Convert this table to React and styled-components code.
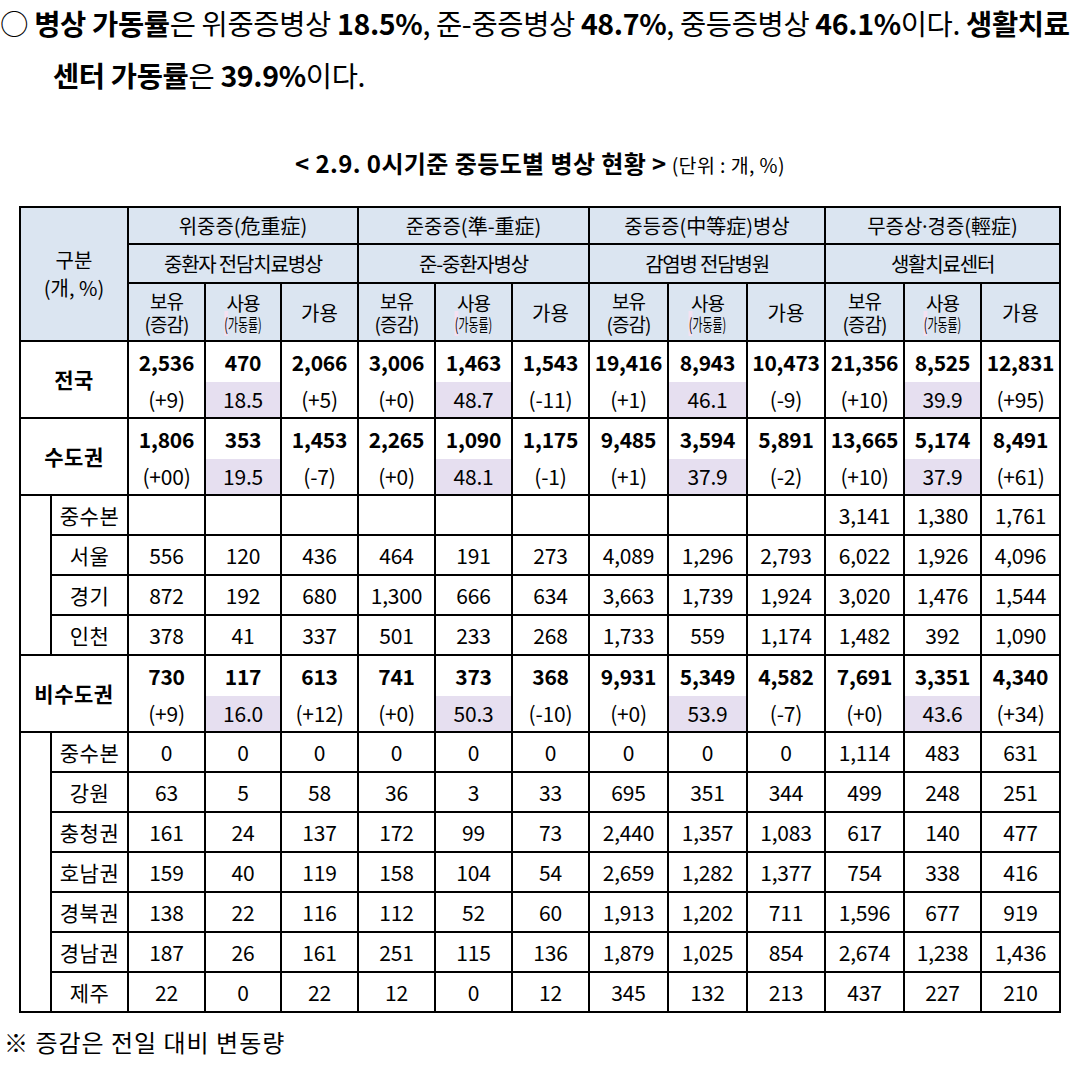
import React from "react";
import styled, { createGlobalStyle } from "styled-components";

const GlobalStyle = createGlobalStyle`
  * {
    box-sizing: border-box;
  }
  body {
    margin: 0;
    background: #fff;
    color: #000;
    font-family: "Noto Sans CJK KR", "Noto Sans", sans-serif;
  }
`;

const COLS = [31, 77, 77, 76, 77, 77, 77, 77, 79, 79, 78, 79, 77, 79];

const GROUPS = [
  { key: "crit", title: "위중증(危重症)", sub: "중환자 전담치료병상" },
  { key: "semi", title: "준중증(準-重症)", sub: "준-중환자병상" },
  { key: "mod", title: "중등증(中等症)병상", sub: "감염병 전담병원" },
  { key: "mild", title: null, sub: "생활치료센터" },
];

const MAJOR = {
  nation: {
    name: "전국",
    top: ["2,536", "470", "2,066", "3,006", "1,463", "1,543", "19,416", "8,943", "10,473", "21,356", "8,525", "12,831"],
    bottom: ["(+9)", "18.5", "(+5)", "(+0)", "48.7", "(-11)", "(+1)", "46.1", "(-9)", "(+10)", "39.9", "(+95)"],
  },
  capital: {
    name: "수도권",
    top: ["1,806", "353", "1,453", "2,265", "1,090", "1,175", "9,485", "3,594", "5,891", "13,665", "5,174", "8,491"],
    bottom: ["(+00)", "19.5", "(-7)", "(+0)", "48.1", "(-1)", "(+1)", "37.9", "(-2)", "(+10)", "37.9", "(+61)"],
  },
  other: {
    name: "비수도권",
    top: ["730", "117", "613", "741", "373", "368", "9,931", "5,349", "4,582", "7,691", "3,351", "4,340"],
    bottom: ["(+9)", "16.0", "(+12)", "(+0)", "50.3", "(-10)", "(+0)", "53.9", "(-7)", "(+0)", "43.6", "(+34)"],
  },
};

const CAPITAL_ROWS = [
  { name: "중수본", values: ["", "", "", "", "", "", "", "", "", "3,141", "1,380", "1,761"] },
  { name: "서울", values: ["556", "120", "436", "464", "191", "273", "4,089", "1,296", "2,793", "6,022", "1,926", "4,096"] },
  { name: "경기", values: ["872", "192", "680", "1,300", "666", "634", "3,663", "1,739", "1,924", "3,020", "1,476", "1,544"] },
  { name: "인천", values: ["378", "41", "337", "501", "233", "268", "1,733", "559", "1,174", "1,482", "392", "1,090"] },
];

const OTHER_ROWS = [
  { name: "중수본", values: ["0", "0", "0", "0", "0", "0", "0", "0", "0", "1,114", "483", "631"] },
  { name: "강원", values: ["63", "5", "58", "36", "3", "33", "695", "351", "344", "499", "248", "251"] },
  { name: "충청권", values: ["161", "24", "137", "172", "99", "73", "2,440", "1,357", "1,083", "617", "140", "477"] },
  { name: "호남권", values: ["159", "40", "119", "158", "104", "54", "2,659", "1,282", "1,377", "754", "338", "416"] },
  { name: "경북권", values: ["138", "22", "116", "112", "52", "60", "1,913", "1,202", "711", "1,596", "677", "919"] },
  { name: "경남권", values: ["187", "26", "161", "251", "115", "136", "1,879", "1,025", "854", "2,674", "1,238", "1,436"] },
  { name: "제주", values: ["22", "0", "22", "12", "0", "12", "345", "132", "213", "437", "227", "210"] },
];

const Page = styled.div`
  width: 1080px;
`;

const Lead = styled.div`
  font-size: 28.5px;
  letter-spacing: -0.35px;
  white-space: nowrap;
`;

const LeadLine = styled.div`
  line-height: 46px;
  padding-left: ${(p) => p.$indent || 0}px;
  margin-top: ${(p) => p.$gap || 0}px;
`;

const B = styled.b`
  font-weight: 700;
`;

const Caption = styled.div`
  margin-top: 50px;
  text-align: center;
  line-height: 30px;
  white-space: nowrap;
`;

const CaptionTitle = styled.span`
  font-size: 24px;
  font-weight: 700;
  letter-spacing: 0.4px;
`;

const CaptionUnit = styled.span`
  font-size: 19.5px;
  letter-spacing: 0.4px;
  margin-left: 5px;
`;

const Grid = styled.table`
  margin: 25px 0 0 19px;
  width: 1040px;
  table-layout: fixed;
  border-collapse: separate;
  border-spacing: 0;
  border-top: 2px solid #000;
  border-left: 2px solid #000;
`;

const Row = styled.tr`
  height: ${(p) => p.$h}px;
`;

const Cell = styled.td`
  padding: 0;
  border-right: 2px solid #000;
  border-bottom: ${(p) => (p.$split ? "none" : "2px solid #000")};
  background: ${(p) => (p.$rate ? "#e6dff0" : "#fff")};
  text-align: center;
  vertical-align: middle;
  white-space: nowrap;
  font-size: 21px;
  font-weight: ${(p) => (p.$bold ? 700 : 400)};
  line-height: 1;
  letter-spacing: ${(p) => (p.$name ? "0.5px" : "-0.2px")};
`;

const Head = styled.th`
  padding: 0;
  border-right: 2px solid #000;
  border-bottom: 2px solid #000;
  background: #dbe5f1;
  text-align: center;
  vertical-align: middle;
  white-space: nowrap;
  font-weight: 400;
  font-size: ${(p) => (p.$small ? 19 : 20)}px;
  line-height: ${(p) => (p.$tall ? 28 : 23)}px;
  letter-spacing: ${(p) => (p.$tight ? "-1.2px" : p.$small ? "-1px" : "0")};
`;

const Rate = styled.span`
  display: block;
  font-size: 17px;
  line-height: 19px;
  letter-spacing: 0;
  transform: scaleX(0.64);
`;

const Tint = styled.span`
  background: #f4e1f1;
`;

const Dot = styled.span`
  margin: 0 -3px;
`;

const Note = styled.div`
  margin-top: 14px;
  font-size: 24px;
  line-height: 30px;
  letter-spacing: 1px;
  padding-left: 4px;
`;

const MajorRows = ({ data }) => (
  <>
    <Row $h={40}>
      <Cell colSpan={2} rowSpan={2} $bold $name>
        {data.name}
      </Cell>
      {data.top.map((v, i) => (
        <Cell key={i} $split $bold>
          {v}
        </Cell>
      ))}
    </Row>
    <Row $h={37}>
      {data.bottom.map((v, i) => (
        <Cell key={i} $rate={i % 3 === 1}>
          {v}
        </Cell>
      ))}
    </Row>
  </>
);

const SubRows = ({ rows }) =>
  rows.map((r, i) => (
    <Row key={r.name} $h={40}>
      {i === 0 && <Cell rowSpan={rows.length} />}
      <Cell $name>{r.name}</Cell>
      {r.values.map((v, j) => (
        <Cell key={j}>{v}</Cell>
      ))}
    </Row>
  ));

export default function App() {
  return (
    <Page>
      <GlobalStyle />
      <Lead>
        <LeadLine>
          ○ <B>병상 가동률</B>은 위중증병상 <B>18.5%</B>, 준-중증병상 <B>48.7%</B>, 중등증병상{" "}
          <B>46.1%</B>이다. <B>생활치료</B>
        </LeadLine>
        <LeadLine $indent={53} $gap={6}>
          <B>센터 가동률</B>은 <B>39.9%</B>이다.
        </LeadLine>
      </Lead>

      <Caption>
        <CaptionTitle>&lt; 2.9. 0시기준 중등도별 병상 현황 &gt;</CaptionTitle>
        <CaptionUnit>(단위 : 개, %)</CaptionUnit>
      </Caption>

      <Grid>
        <colgroup>
          {COLS.map((w, i) => (
            <col key={i} style={{ width: w }} />
          ))}
        </colgroup>
        <thead>
          <Row $h={37}>
            <Head colSpan={2} rowSpan={3} $tall>
              구분
              <br />
              (개, %)
            </Head>
            {GROUPS.map((g) => (
              <Head key={g.key} colSpan={3}>
                {g.title || (
                  <>
                    무증상<Dot>·</Dot>경증(輕症)
                  </>
                )}
              </Head>
            ))}
          </Row>
          <Row $h={39}>
            {GROUPS.map((g) => (
              <Head key={g.key} colSpan={3} $tight>
                {g.sub}
              </Head>
            ))}
          </Row>
          <Row $h={58}>
            {GROUPS.map((g) => (
              <React.Fragment key={g.key}>
                <Head $small>
                  보유
                  <br />
                  (증감)
                </Head>
                <Head $small>
                  사용
                  <Rate>
                    <Tint>(</Tint>가동률)
                  </Rate>
                </Head>
                <Head>가용</Head>
              </React.Fragment>
            ))}
          </Row>
        </thead>
        <tbody>
          <MajorRows data={MAJOR.nation} />
          <MajorRows data={MAJOR.capital} />
          <SubRows rows={CAPITAL_ROWS} />
          <MajorRows data={MAJOR.other} />
          <SubRows rows={OTHER_ROWS} />
        </tbody>
      </Grid>

      <Note>※ 증감은 전일 대비 변동량</Note>
    </Page>
  );
}
